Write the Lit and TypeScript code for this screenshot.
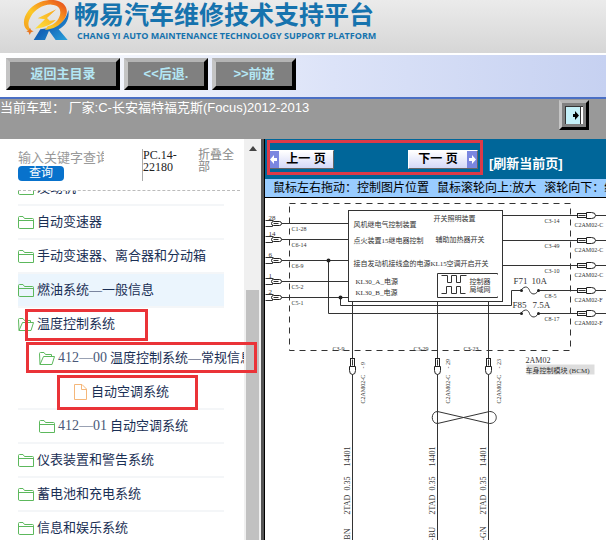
import { LitElement, html, svg, css } from "lit";
import { customElement } from "lit/decorators.js";
import { classMap } from "lit/directives/class-map.js";

type Kind = "closed" | "open" | "file";

interface TreeItem {
  label: string;
  code?: string;
  kind: Kind;
  level: number;
  active?: boolean;
}

const TREE: TreeItem[] = [
  { label: "发动机", kind: "closed", level: 0 },
  { label: "自动变速器", kind: "closed", level: 0 },
  { label: "手动变速器、离合器和分动箱", kind: "closed", level: 0 },
  { label: "燃油系统—一般信息", kind: "closed", level: 0, active: true },
  { label: "温度控制系统", kind: "open", level: 0 },
  { code: "412—00", label: "温度控制系统—常规信息", kind: "open", level: 1 },
  { label: "自动空调系统", kind: "file", level: 2 },
  { code: "412—01", label: "自动空调系统", kind: "closed", level: 1 },
  { label: "仪表装置和警告系统", kind: "closed", level: 0 },
  { label: "蓄电池和充电系统", kind: "closed", level: 0 },
  { label: "信息和娱乐系统", kind: "closed", level: 0 },
];

const SANS = css`"Liberation Sans", "Noto Sans CJK SC", sans-serif`;
const SERIF = css`"Liberation Serif", "Noto Sans CJK SC", serif`;

@customElement("site-header")
class SiteHeader extends LitElement {
  static styles = css`
    :host {
      display: flex;
      gap: 5px;
      height: 55px;
      padding-left: 23px;
      box-sizing: border-box;
      background: linear-gradient(#ebebeb, #d6d6d6);
      border-bottom: 2px solid #fff;
      overflow: hidden;
    }
    .logo {
      width: 46px;
      height: 41px;
      flex: none;
    }
    .names {
      color: #1673ae;
      white-space: nowrap;
    }
    .title {
      margin: 0;
      font: bold 25px/30px ${SANS};
    }
    .subtitle {
      margin: 0;
      padding-left: 3px;
      font: bold 9px/12px "Open Sans", sans-serif;
    }
  `;

  render() {
    return html`
      <svg class="logo" viewBox="24 0 138 123" aria-hidden="true">
        <defs>
          <linearGradient id="fire" x1="0" y1="1" x2="1" y2="0">
            <stop offset="0" stop-color="#f39a1e" />
            <stop offset="0.4" stop-color="#fbc926" />
            <stop offset="0.7" stop-color="#f58a1f" />
            <stop offset="1" stop-color="#e2401c" />
          </linearGradient>
          <linearGradient id="bolt" x1="0" y1="1" x2="1" y2="0">
            <stop offset="0" stop-color="#fde23a" />
            <stop offset="1" stop-color="#f9a51f" />
          </linearGradient>
          <linearGradient id="sea" x1="0" y1="0" x2="1" y2="1">
            <stop offset="0" stop-color="#1d4f9f" />
            <stop offset="0.5" stop-color="#1565b8" />
            <stop offset="1" stop-color="#29a3dd" />
          </linearGradient>
        </defs>
        <path fill="url(#sea)" d="M160 30C165 60 150 78 131 88L158 120H122L102 92L90 120H56L76 88L104 84C134 76 154 60 160 30Z" />
        <path
          fill="url(#fire)"
          d="M50 97C22 90 20 58 40 32C60 8 96 -6 127 2C156 10 164 36 146 60C134 77 116 87 90 90L98 79C118 74 130 62 135 45C139 26 130 15 110 14C86 12 60 28 47 50C37 67 38 84 50 92Z"
        />
        <path fill="url(#bolt)" d="M124 28L68 55L90 58L60 86C84 84 106 76 122 60L104 62L96 54Z" />
        <path fill="#e8751f" d="M45 83L48 91L56 94L48 97L44 105L41 97L34 94L42 91Z" />
      </svg>
      <div class="names">
        <h1 class="title">畅易汽车维修技术支持平台</h1>
        <p class="subtitle">CHANG YI AUTO MAINTENANCE TECHNOLOGY SUPPORT PLATFORM</p>
      </div>
    `;
  }
}

@customElement("tool-bar")
class ToolBar extends LitElement {
  static styles = css`
    :host {
      display: block;
    }
    .actions {
      display: flex;
      gap: 4px;
      height: 44px;
      box-sizing: border-box;
      padding: 3px 6px;
      background: linear-gradient(90deg, #fff, #dce3f8 55%, #c6d1f1);
      border-bottom: 2px solid #4a6fc4;
    }
    button {
      font: bold 13px/20px ${SANS};
      color: #b4e6f4;
      background: #808080;
      border: 4px solid;
      border-color: #b4b4b4 #000 #000 #c4c4c4;
      padding: 0;
      height: 32px;
      width: 84px;
    }
    .wide {
      width: 114px;
    }
    .vehicle {
      display: flex;
      justify-content: space-between;
      height: 40px;
      background: #999;
      color: #fff;
      font: 13px/18px ${SANS};
      white-space: pre;
    }
    .toggle {
      display: grid;
      place-items: center;
      width: 30px;
      height: 30px;
      margin: 1px 17px 0 0;
      border-width: 3px;
    }
    .toggle svg {
      width: 18px;
      height: 18px;
    }
  `;

  render() {
    return html`
      <div class="actions">
        <button class="wide">返回主目录</button>
        <button>&lt;&lt;后退.</button>
        <button>&gt;&gt;前进</button>
      </div>
      <div class="vehicle">
        <span>当前车型： 厂家:C-长安福特福克斯(Focus)2012-2013</span>
        <button class="toggle" aria-label="切换目录">
          <svg viewBox="0 0 18 18">
            <rect x="0" y="0" width="18" height="18" fill="#c4f0f8" />
            <path d="M0 0H18V1H1V18H0Z" fill="#333" />
            <path d="M15.500 1V18" stroke="#333" />
            <path d="M17 1V18" stroke="#fff" stroke-width="2" />
            <path d="M8 8H10V5L14 9.500L10 14V11H8Z" fill="#000" />
          </svg>
        </button>
      </div>
    `;
  }
}

@customElement("catalog-tree")
class CatalogTree extends LitElement {
  static styles = css`
    :host {
      position: relative;
      display: flex;
      background: #fff;
      border-right: 3px solid #555;
      box-shadow: 1px 0 #000;
      box-sizing: border-box;
      min-height: 0;
    }
    .content {
      flex: 1;
      min-width: 0;
      display: flex;
      flex-direction: column;
      padding-left: 18px;
      overflow: hidden;
    }
    .search {
      display: flex;
      align-items: flex-start;
      flex: none;
      height: 52px;
      padding-top: 10px;
      box-sizing: border-box;
      margin-right: 4px;
      border-bottom: 1px dashed #bbb;
    }
    form {
      display: flex;
      flex-direction: column;
      align-items: flex-start;
      width: 124px;
    }
    input {
      width: 86px;
      height: 17px;
      padding: 0;
      border: 0;
      outline: 0;
      background: none;
      font: 13px/17px ${SANS};
    }
    input::placeholder {
      color: #999;
    }
    .query {
      width: 46px;
      height: 15px;
      padding: 0;
      border: 0;
      border-radius: 4px;
      background: #0872cc;
      color: #fff;
      font: 12px/15px ${SANS};
    }
    .version {
      width: 56px;
      height: 32px;
      box-sizing: border-box;
      border-left: 1px solid #aaa;
      font: 12px/12px ${SERIF};
      color: #222;
    }
    .version span {
      display: block;
      width: 36px;
    }
    .fold {
      width: 40px;
      font: 12px/12px ${SANS};
      color: #888;
      text-decoration: none;
    }
    .list-view {
      flex: 1;
      min-height: 0;
      overflow: hidden;
    }
    ul {
      list-style: none;
      margin: -19px 0 0;
      padding: 0;
    }
    li {
      height: 34px;
      width: 206px;
      box-sizing: border-box;
      border-bottom: 2px solid #f4f6f8;
    }
    .active {
      background: #ebf5fd;
    }
    .open {
      border-color: #fff;
    }
    .item {
      display: flex;
      align-items: center;
      gap: 3px;
      height: 32px;
      font: 13px/20px ${SERIF};
      color: #1a2f55;
      text-decoration: none;
      white-space: nowrap;
    }
    .code {
      font-size: 14px;
      color: #4a5878;
    }
    .level1 .item {
      padding-left: 21px;
    }
    .level2 .item {
      padding-left: 54px;
    }
    .icon {
      width: 16px;
      height: 16px;
      flex: none;
      fill: none;
      stroke: #5cb85c;
    }
    .file {
      stroke: #f5b77a;
    }
    .scroll {
      display: flex;
      flex-direction: column;
      align-items: center;
      width: 17px;
      flex: none;
      background: #f0f0f0;
    }
    .arrow {
      margin-top: 7px;
      width: 8px;
      height: 5px;
    }
    .thumb {
      flex: 1;
      width: 13px;
      margin-top: 139px;
      background: #c1c1c1;
    }
    .mark {
      position: absolute;
      box-sizing: border-box;
      border: 3px solid #ea3338;
      pointer-events: none;
    }
    .mark-system {
      left: 25px;
      top: 170px;
      width: 123px;
      height: 32px;
    }
    .mark-section {
      left: 26px;
      top: 203px;
      width: 231px;
      height: 31px;
    }
    .mark-page {
      left: 57px;
      top: 236px;
      width: 141px;
      height: 35px;
    }
  `;

  private icon(kind: Kind) {
    const shapes = {
      closed: svg`<path d="M0.500 13V3.500Q0.500 2.500 1.500 2.500H5L6.500 4.500H14.500Q15.500 4.500 15.500 5.500V14.500H1.500Q0.500 14.500 0.500 13ZM0.500 6.500H15.500" />`,
      open: svg`<path d="M1 14.500L0.500 3.500Q0.500 2.500 1.500 2.500H5L6.500 4.500H12.500V6.500M1 14.500H13L15.500 6.500H4.500L1 14.500" />`,
      file: svg`<path d="M2.500 0.500H10L14.500 5V15.500H2.500ZM9.500 0.500V5.500H14.500" />`,
    };
    return html`<svg class="icon ${kind === "file" ? "file" : ""}" viewBox="0 0 16 16" aria-hidden="true">${shapes[kind]}</svg>`;
  }

  render() {
    return html`
      <div class="content">
        <div class="search">
          <form>
            <input type="text" aria-label="关键字" placeholder="输入关键字查询" />
            <button class="query" type="button">查询</button>
          </form>
          <div class="version"><span>PC.14-22180</span></div>
          <a class="fold" href="#fold">折叠全部</a>
        </div>
        <div class="list-view">
          <ul>
            ${TREE.map(
              (t) => html`<li
                class=${classMap({
                  active: !!t.active,
                  open: t.kind === "open",
                  level1: t.level === 1,
                  level2: t.level === 2,
                })}
              >
                <a class="item" href="#item">
                  ${this.icon(t.kind)}
                  ${t.code ? html`<span class="code">${t.code}</span>` : ""}
                  <span>${t.label}</span>
                </a>
              </li>`
            )}
          </ul>
        </div>
      </div>
      <div class="scroll" aria-hidden="true">
        <svg class="arrow" viewBox="0 0 8 5"><path d="M0 5L4 0L8 5Z" fill="#444" /></svg>
        <div class="thumb"></div>
      </div>
      <div class="mark mark-system"></div>
      <div class="mark mark-section"></div>
      <div class="mark mark-page"></div>
    `;
  }
}

const LEFT_PINS = [
  { y: 223, pin: "28", label: "C1-28" },
  { y: 239, pin: "14", label: "C6-14" },
  { y: 260, pin: "6", label: "C6-9" },
  { y: 281, pin: "1", label: "C5-2" },
  { y: 297, pin: "2", label: "C5-1" },
];

const RIGHT_PINS = [
  { y: 215, from: 502, label: "C3-14", plug: "C2AM02-C" },
  { y: 240, from: 502, label: "C3-49", plug: "C2AM02-C" },
  { y: 265, from: 502, label: "C3-10", plug: "C2AM02-C" },
  { y: 290, from: 538, label: "C8-5", plug: "C2AM02-F" },
  { y: 313, from: 538, label: "C8-17", plug: "C2AM02-F" },
];

const DOWN_WIRES = [
  { x: 352, pin: "- 9", color: "T-BN", label: "C3-9", lx: 332 },
  { x: 437, pin: "- 29", color: "N-BU", label: "C3-29", lx: 413 },
  { x: 488, pin: "- 23", color: "H-GN", label: "C3-23", lx: 463 },
];

@customElement("wiring-diagram")
class WiringDiagram extends LitElement {
  static styles = css`
    :host {
      display: block;
      overflow: hidden;
      background: #fff;
    }
    svg {
      display: block;
      width: 341px;
      height: 342px;
      overflow: visible;
      fill: none;
      stroke: #333;
    }
    text {
      stroke: none;
      fill: #333;
      font: 7px "Liberation Serif", "Noto Sans CJK SC", serif;
    }
    .small {
      font-size: 6px;
    }
    .wire {
      font-size: 8px;
    }
    .large {
      font-size: 9px;
    }
    .dash {
      stroke-dasharray: 6 5;
    }
    .dot {
      fill: #222;
      stroke: none;
    }
    .tag {
      fill: #ddd;
      stroke: none;
    }
    .plug {
      fill: #fff;
      stroke: #222;
    }
  `;

  render() {
    return html`
      <svg viewBox="265 198 341 342" role="img" aria-label="自动空调系统电路图">
        <g transform="translate(0.500 0.500)">
          <path class="dash" d="M289 203H570V350H289Z" />
          <rect x="348" y="210" width="154" height="91" />
          ${LEFT_PINS.map(
            (p) => svg`
              <path d="M265 ${p.y - 3}H273M265 ${p.y + 3}H272V${p.y}M281 ${p.y}H348" />
              <rect class="plug" x="271" y="${p.y - 2}" width="10" height="4" rx="2" />
              <path d="M273 ${p.y}H278" />
              <text x="268" y="${p.y - 4}">${p.pin}</text>
              <text class="small" x="291" y="${p.y + 7}">${p.label}</text>`
          )}
          ${RIGHT_PINS.map(
            (p) => svg`
              <path d="M${p.from} ${p.y}H577M595 ${p.y}H640" />
              <path class="plug" d="M586 ${p.y - 3}H591Q595 ${p.y - 3} 595 ${p.y}Q595 ${p.y + 3} 591 ${p.y + 3}H586L583 ${p.y}Z" />
              <rect class="plug" x="577" y="${p.y - 2}" width="9" height="4" />
              <path d="M578 ${p.y}H585" />
              <text class="small" x="544" y="${p.y + 7}">${p.label}</text>
              <text class="small" x="574" y="${p.y + 11}">${p.plug}</text>`
          )}
          ${DOWN_WIRES.map(
            (w) => svg`
              <path d="M${w.x} 301V541" />
              <path class="plug" d="M${w.x - 3} 366V370Q${w.x - 3} 374 ${w.x} 374Q${w.x + 3} 374 ${w.x + 3} 370V366L${w.x} 363Z" />
              <rect class="plug" x="${w.x - 2}" y="358" width="4" height="8" />
              <path d="M${w.x} 359V365" />
              <text class="small" x="${w.lx}" y="350">${w.label}</text>
              <text class="small" transform="translate(${w.x + 12} 368) rotate(-90)">${w.pin}</text>
              <text class="small" transform="translate(${w.x + 12} 403) rotate(-90)">C2AM02-C</text>
              <text class="wire" transform="translate(${w.x - 3} 466) rotate(-90)">14401</text>
              <text class="wire" transform="translate(${w.x - 3} 490) rotate(-90)">0.35</text>
              <text class="wire" transform="translate(${w.x - 3} 514) rotate(-90)">2TAD</text>
              <text class="wire" transform="translate(${w.x - 3} 546) rotate(-90)">${w.color}</text>`
          )}
          <path d="M340 297V305H511V290H520M328 260V313H520" />
          <circle class="dot" cx="328" cy="260" r="2" />
          <circle class="dot" cx="340" cy="297" r="2" />
          <path d="M520 290C525 284 528 287 529 290S534 296 538 290M520 313C525 307 528 310 529 313S534 319 538 313" />
          <circle class="dot" cx="521" cy="290" r="1.500" />
          <circle class="dot" cx="538" cy="290" r="1.500" />
          <circle class="dot" cx="521" cy="313" r="1.500" />
          <circle class="dot" cx="538" cy="313" r="1.500" />
          <path d="M497 274V273H437V297H497V296" />
          <path d="M441 275H447V282H451V275H456V282H460V275H466M441 293H446V286H451V293H456V286H460V293H465" />
          <path d="M437 411C430 411 430 423 437 423L489 411C498 411 498 423 489 423Z" />
          <text x="353" y="226">风机继电气控制装置</text>
          <text x="353" y="242">点火装置15继电器控制</text>
          <text x="353" y="265">接自发动机接线盒的电源KL15</text>
          <text x="446" y="265">空调开启开关</text>
          <text x="355" y="283">KL30_A_电源</text>
          <text x="355" y="294">KL30_B_电源</text>
          <text x="433" y="220">开关照明装置</text>
          <text x="435" y="241">辅助加热器开关</text>
          <text x="469" y="283">控制器</text>
          <text x="469" y="291">局域网</text>
          <text class="large" x="513" y="283">F71</text>
          <text class="large" x="531" y="283">10A</text>
          <text class="large" x="512" y="307">F85</text>
          <text class="large" x="532" y="307">7.5A</text>
          <rect class="tag" x="526" y="364" width="68" height="10" />
          <text class="wire" x="525" y="362">2AM02</text>
          <text x="525" y="372">车身控制模块 (BCM)</text>
        </g>
      </svg>
    `;
  }
}

@customElement("page-viewer")
class PageViewer extends LitElement {
  static styles = css`
    :host {
      display: flex;
      flex-direction: column;
      min-width: 0;
      min-height: 0;
      margin-left: 1px;
      overflow: hidden;
    }
    .nav {
      position: relative;
      display: flex;
      align-items: center;
      flex: none;
      height: 40px;
      padding-left: 3px;
      background: #069;
    }
    .step {
      display: flex;
      align-items: center;
      height: 19px;
      padding: 0;
      border: 1px solid #fff;
      border-right-color: #666;
      border-bottom-color: #666;
      background: linear-gradient(#fff, #d4d8f8);
      color: #000;
      font: bold 12px/17px ${SANS};
    }
    .step span {
      flex: 1;
      white-space: nowrap;
    }
    .prev {
      width: 66px;
    }
    .next {
      width: 70px;
      margin-left: 74px;
    }
    .step svg {
      width: 10px;
      height: 17px;
      flex: none;
      background: #7a86e0;
      fill: #fff;
    }
    .reload {
      margin: 10px 0 0 11px;
      color: #fff;
      font: bold 13px/20px ${SANS};
      text-decoration: none;
      white-space: nowrap;
    }
    .mark {
      position: absolute;
      left: 2px;
      top: 1px;
      width: 216px;
      height: 35px;
      box-sizing: border-box;
      border: 3px solid #dc3a48;
      pointer-events: none;
    }
    .hint {
      display: flex;
      flex: none;
      height: 18px;
      padding-left: 8px;
      background: #9cf;
      border-bottom: 1px solid #000;
      color: #000;
      font: 12px/19px ${SANS};
      white-space: nowrap;
    }
    .hint span + span {
      margin-left: 8px;
    }
    wiring-diagram {
      flex: 1;
      min-height: 0;
    }
  `;

  render() {
    return html`
      <div class="nav">
        <button class="step prev">
          <svg viewBox="0 0 10 17"><path d="M1 8.500L5 4V7H8V10H5V13Z" /></svg><span>上一 页</span>
        </button>
        <button class="step next">
          <span>下一 页</span><svg viewBox="0 0 10 17"><path d="M9 8.500L5 4V7H2V10H5V13Z" /></svg>
        </button>
        <a class="reload" href="#reload">[刷新当前页]</a>
        <div class="mark"></div>
      </div>
      <div class="hint">
        <span>鼠标左右拖动：控制图片位置</span>
        <span>鼠标滚轮向上:放大</span>
        <span>滚轮向下：缩小</span>
      </div>
      <wiring-diagram></wiring-diagram>
    `;
  }
}

@customElement("app-root")
class AppRoot extends LitElement {
  static styles = css`
    :host {
      display: flex;
      flex-direction: column;
      height: 100vh;
      overflow: hidden;
    }
    site-header,
    tool-bar {
      flex: none;
    }
    main {
      flex: 1;
      min-height: 0;
      display: grid;
      grid-template-columns: 264px minmax(0, 1fr);
      grid-template-rows: minmax(0, 1fr);
    }
  `;

  render() {
    return html`
      <site-header></site-header>
      <tool-bar></tool-bar>
      <main>
        <catalog-tree></catalog-tree>
        <page-viewer></page-viewer>
      </main>
    `;
  }
}
